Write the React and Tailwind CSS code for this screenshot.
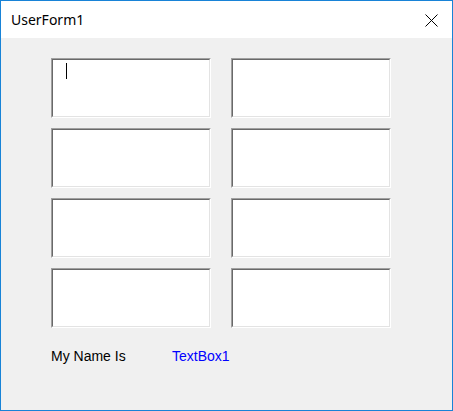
const boxes = [0, 1, 2, 3, 4, 5, 6, 7];

function TextBox({ focused }) {
  return (
    <div className="h-[60px] w-[160px] border border-t-[#a0a0a0] border-l-[#a0a0a0] border-b-white border-r-white">
      <div className="relative h-full w-full border border-t-[#696969] border-l-[#696969] border-b-[#e3e3e3] border-r-[#e3e3e3] bg-white">
        {focused && <span className="absolute left-[13px] top-[3px] h-[16px] w-px bg-black" />}
      </div>
    </div>
  );
}

export default function App() {
  return (
    <div className="flex h-[411px] w-[453px] flex-col border border-[#1883d7] bg-[#f0f0f0] font-['Liberation_Sans',Arial,sans-serif]">
      <div className="flex h-[37px] items-center justify-between bg-white pl-[10px] pr-[14px]">
        <span className="font-['Noto_Sans',sans-serif] text-[14px] text-black">UserForm1</span>
        <svg width="13" height="13" viewBox="0 0 13 13" className="mt-[1px]">
          <path d="M0.5 0.5 L12.5 12.5 M12.5 0.5 L0.5 12.5" stroke="#000" strokeWidth="1" fill="none" />
        </svg>
      </div>
      <div className="pl-[50px] pt-[20px]">
        <div className="grid w-[340px] grid-cols-[160px_160px] gap-x-[20px] gap-y-[10px]">
          {boxes.map((i) => (
            <TextBox key={i} focused={i === 0} />
          ))}
        </div>
        <div className="mt-[20px] flex text-[14px] leading-[16px]">
          <span className="w-[121px] text-black">My Name Is</span>
          <span className="text-[#0000ff]">TextBox1</span>
        </div>
      </div>
    </div>
  );
}
